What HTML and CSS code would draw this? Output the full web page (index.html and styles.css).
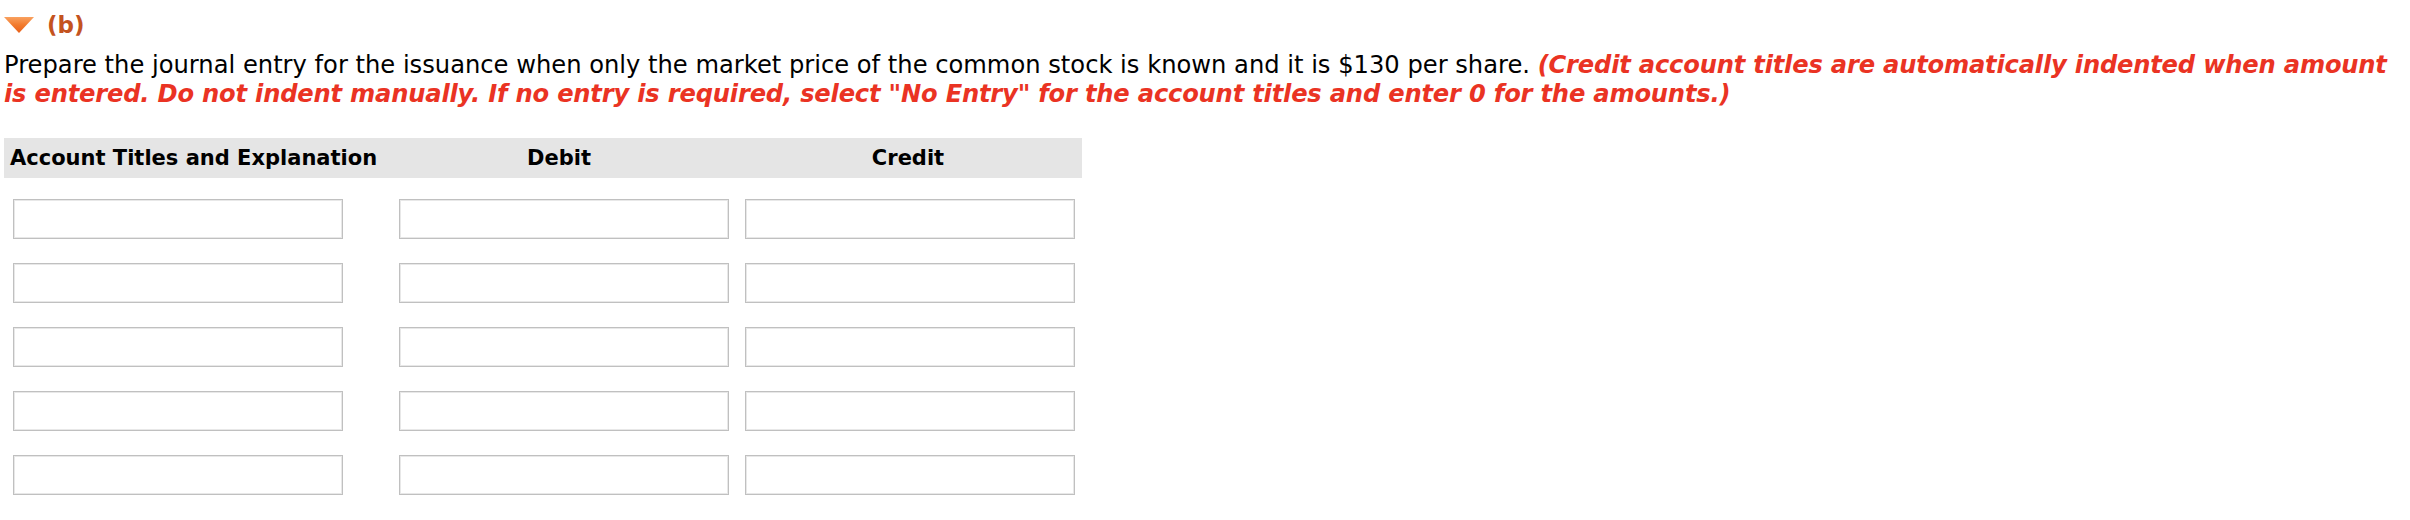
FILE: index.html
```html
<!DOCTYPE html>
<html>
<head>
<meta charset="utf-8">
<link rel="stylesheet" href="styles.css">
</head>
<body>
<div class="part">
  <div class="part-head">
    <svg class="caret" width="30" height="16" viewBox="0 0 30 16">
      <defs>
        <linearGradient id="g" x1="0" y1="0" x2="0" y2="1">
          <stop offset="0" stop-color="#f9a15f"/>
          <stop offset="0.5" stop-color="#f27a2c"/>
          <stop offset="1" stop-color="#e8601a"/>
        </linearGradient>
      </defs>
      <polygon points="0,0 30,0 15,16" fill="url(#g)"/>
    </svg>
    <span class="part-label">(b)</span>
  </div>
  <p class="question">Prepare the journal entry for the issuance when only the market price of the common stock is known and it is $130 per share. <em class="note">(Credit account titles are automatically indented when amount is entered. Do not indent manually. If no entry is required, select "No Entry" for the account titles and enter 0 for the amounts.)</em></p>
  <div class="journal">
    <div class="jhead">
      <div class="hcell hcell-title">Account Titles and Explanation</div>
      <div class="hcell">Debit</div>
      <div class="hcell">Credit</div>
    </div>
    <div class="jrow"><input class="fld fld-title"><input class="fld"><input class="fld"></div>
    <div class="jrow"><input class="fld fld-title"><input class="fld"><input class="fld"></div>
    <div class="jrow"><input class="fld fld-title"><input class="fld"><input class="fld"></div>
    <div class="jrow"><input class="fld fld-title"><input class="fld"><input class="fld"></div>
    <div class="jrow"><input class="fld fld-title"><input class="fld"><input class="fld"></div>
  </div>
</div>
</body>
</html>
```
FILE: styles.css
```css
html, body {
  margin: 0;
  padding: 0;
  background: #fff;
}
body {
  font-family: "DejaVu Sans", Verdana, sans-serif;
  color: #000;
}
.part {
  padding: 0 0 0 4px;
}
.part-head {
  display: flex;
  align-items: center;
  gap: 13px;
  height: 30px;
  padding-top: 10px;
}
.caret {
  display: block;
}
.part-label {
  font-weight: bold;
  font-size: 23px;
  color: #c4531f;
  line-height: 30px;
}
.question {
  margin: 11px 0 0 0;
  font-size: 24.2px;
  line-height: 29px;
  width: 2400px;
}
.note {
  color: #ea3323;
  font-weight: bold;
  font-style: italic;
  letter-spacing: -0.2px;
}
.journal {
  margin-top: 29px;
  width: 1078px;
}
.jhead {
  display: grid;
  grid-template-columns: 380px 350px 348px;
  background: #e5e5e5;
  height: 40px;
  align-items: center;
  font-weight: bold;
  font-size: 21px;
}
.hcell {
  text-align: center;
  padding-left: 0;
}
.hcell-title {
  text-align: left;
  padding-left: 6px;
}
.jrow {
  display: flex;
  margin-top: 21px;
  padding-left: 9px;
}
.jrow + .jrow {
  margin-top: 24px;
}
.fld {
  flex: 0 0 auto;
  box-sizing: border-box;
  width: 330px;
  height: 40px;
  margin: 0 16px 0 0;
  padding: 0;
  border: 1px solid #c0c0c0;
  box-shadow: inset 0 0 0 1px #e8e8e8;
  background: #fff;
  font: inherit;
}
.fld:last-child {
  margin-right: 0;
}
.fld-title {
  margin-right: 56px;
}
```
